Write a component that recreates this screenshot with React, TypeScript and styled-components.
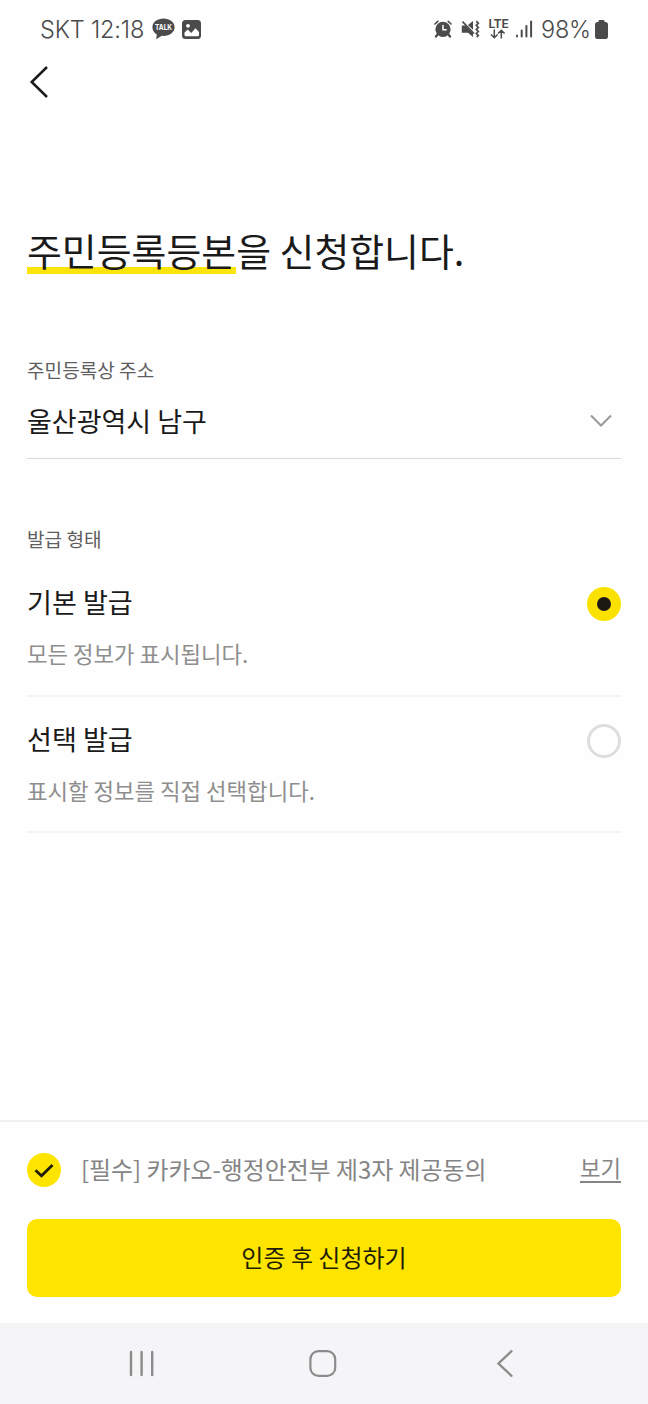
import React, { useState } from 'react';
import styled, { createGlobalStyle } from 'styled-components';

const GlobalStyle = createGlobalStyle`
  * { box-sizing: border-box; }
  body {
    margin: 0;
    background: #fefefe;
    font-family: "Noto Sans CJK KR", "Noto Sans", sans-serif;
    color: #1a1a1a;
  }
  button { font: inherit; color: inherit; background: none; border: 0; padding: 0; cursor: pointer; }
`;

const Screen = styled.div`
  display: flex;
  flex-direction: column;
  width: 648px;
  height: 1404px;
  background: #fefefe;
  overflow: hidden;
`;

const StatusBar = styled.header`
  display: flex;
  justify-content: space-between;
  align-items: center;
  height: 58px;
  padding: 0 40px 0 40px;
  color: #4b4b4b;
  svg { display: block; flex: none; }
`;

const StatusGroup = styled.div`
  display: flex;
  align-items: center;
`;

const StatusText = styled.span`
  display: block;
  padding-top: 1px;
  font-family: Inter, Roboto, sans-serif;
  font-size: 23.5px;
  font-weight: 340;
  line-height: 28px;
  letter-spacing: -0.15px;
  white-space: nowrap;
`;

const IconSlot = styled.span<{ $left: number }>`
  display: block;
  margin-left: ${(p) => p.$left}px;
`;

const NetworkType = styled.div`
  display: flex;
  flex-direction: column;
  align-items: center;
  width: 21px;
  margin: 0 7px 0 8px;
  padding-bottom: 1px;
  font: 600 12.5px/11px Roboto, sans-serif;
`;

const TopBar = styled.nav`
  display: flex;
  align-items: center;
  height: 48px;
  padding-left: 28px;
  svg { display: block; }
`;

const Main = styled.main`
  flex: 1;
  padding: 116px 27px 0;
`;

const Title = styled.h1`
  margin: 0;
  font-size: 37.9px;
  font-weight: 400;
  line-height: 56px;
  white-space: nowrap;
`;

const Highlight = styled.span`
  display: inline-block;
  height: 56px;
  background: linear-gradient(#fbe30c, #fbe30c) 0 45px / 100% 7px no-repeat;
`;

const Label = styled.h2`
  margin: 0;
  color: #5e5e5e;
  font-size: 19.1px;
  font-weight: 400;
  line-height: 28px;
`;

const AddressSection = styled.section`
  margin-top: 78px;
`;

const SelectField = styled.button`
  display: flex;
  align-items: center;
  justify-content: space-between;
  width: 100%;
  height: 75px;
  padding-right: 8px;
  border-bottom: 1px solid #d9d9d9;
  font-size: 27px;
  line-height: 40px;
  svg { display: block; }
`;

const IssueSection = styled.section`
  margin-top: 66px;
`;

const Option = styled.div<{ $first?: boolean }>`
  display: flex;
  justify-content: space-between;
  align-items: flex-start;
  height: ${(p) => (p.$first ? '144px' : '136px')};
  padding-top: ${(p) => (p.$first ? '29px' : '22px')};
  border-bottom: 2px solid #f4f4f4;
  cursor: pointer;
`;

const OptionName = styled.div`
  font-size: 27.1px;
  line-height: 40px;
`;

const OptionHint = styled.div`
  margin-top: 14px;
  color: #8e8e8e;
  font-size: 22.3px;
  line-height: 34px;
`;

const Radio = styled.span<{ $checked: boolean }>`
  display: flex;
  align-items: center;
  justify-content: center;
  width: 34px;
  height: 34px;
  margin-top: 5px;
  border-radius: 50%;
  border: ${(p) => (p.$checked ? '0' : '3px solid #dedede')};
  background: ${(p) => (p.$checked ? '#fae100' : 'transparent')};
  &::after {
    content: '';
    width: 14px;
    height: 14px;
    border-radius: 50%;
    background: ${(p) => (p.$checked ? '#1c1a10' : 'transparent')};
  }
`;

const Footer = styled.footer`
  height: 203px;
  padding: 26px 27px 0;
  border-top: 2px solid #f0f0f0;
`;

const ConsentRow = styled.div`
  display: flex;
  align-items: center;
  height: 44px;
  color: #858585;
  svg { display: block; margin-right: 20px; }
`;

const ConsentText = styled.span`
  flex: 1;
  padding-bottom: 3px;
  font-size: 23.9px;
  line-height: 36px;
  white-space: nowrap;
`;

const ViewLink = styled.button`
  height: 28px;
  margin-bottom: 3px;
  padding-bottom: 1px;
  border-bottom: 2px solid #858585;
  font-size: 22.3px;
  line-height: 25px;
`;

const SubmitButton = styled.button`
  display: block;
  width: 100%;
  height: 78px;
  margin-top: 27px;
  padding-bottom: 3px;
  border-radius: 10px;
  background: #fee500;
  color: #1f1c08;
  font-size: 24px;
  line-height: 36px;
`;

const SystemNav = styled.div`
  display: grid;
  grid-template-columns: 181px 188px 18px;
  align-items: center;
  height: 81px;
  padding-left: 128px;
  background: #f5f5f7;
  svg { display: block; }
`;

const TalkIcon = () => (
  <svg width="23" height="22" viewBox="0 0 23 22">
    <path d="M11.5 0.5C5.2 0.5 0.4 4.4 0.4 9.2c0 3.2 2 5.9 4.400 7.200L4.2 21.300l5.500-3.500c.6.1 1.200.1 1.800.1 6.300 0 11.100-3.900 11.100-8.700S17.800.5 11.500.5z" fill="#4b4b4b" />
    <text x="11.5" y="12.2" textAnchor="middle" textLength="17" lengthAdjust="spacingAndGlyphs" fontFamily="Inter, sans-serif" fontWeight="700" fontSize="8" fill="#fff">TALK</text>
  </svg>
);

const PhotoIcon = () => (
  <svg width="19" height="19" viewBox="0 0 19 19">
    <rect width="19" height="19" rx="3.5" fill="#4b4b4b" />
    <circle cx="6" cy="5.8" r="1.9" fill="#fff" />
    <path d="M2.500 15V12.600L5.800 9.600l3.400 3.300 4.300-4.700 3.500 3.800v3q0 1.200-1.200 1.200H3.700q-1.200 0-1.200-1.200z" fill="#fff" />
  </svg>
);

const AlarmIcon = () => (
  <svg width="18" height="18" viewBox="0 0 18 18" fill="none" stroke="#4b4b4b" strokeLinecap="round">
    <circle cx="9" cy="9.3" r="7.6" fill="#4b4b4b" stroke="none" />
    <path d="M1 4 3.800 1.300M17 4l-2.800-2.700" strokeWidth="1.6" />
    <path d="M3.800 14 2 16.500M14.200 14l1.800 2.500" strokeWidth="2.2" />
    <path d="M9 5.500v4.300h3.200" stroke="#fff" strokeWidth="1.5" />
  </svg>
);

const MuteIcon = () => (
  <svg width="19" height="18" viewBox="0 0 19 18" fill="none" stroke="#4b4b4b">
    <path d="M.8 5.500h3.600L12 13.200V17l-5-4.300H.8zM7 5 12 1v8.800z" fill="#4b4b4b" stroke="none" />
    <path d="M1.500 1.700 13 13.500" strokeWidth="1.7" />
    <path d="M15.300 1.200l2 2.100-2 2 2 2.100-2 2 2 2.100-2 2 2 2.100-1.500 1.600" strokeWidth="1.7" />
  </svg>
);

const DataArrows = () => (
  <svg width="16" height="10" viewBox="0 0 16 10" fill="none" stroke="#4b4b4b" strokeWidth="1.5">
    <path d="M4.300.5v8M1 5.500l3.300 3.300 3.300-3.300M11.300 9.500v-8M8 4.500l3.300-3.300 3.300 3.300" />
  </svg>
);

const SignalIcon = () => (
  <svg width="17" height="18" viewBox="0 0 17 18" fill="#4b4b4b">
    <rect x="0" y="14.5" width="2" height="3" rx="1" />
    <rect x="4.7" y="9.5" width="2" height="8" rx="1" />
    <rect x="9.4" y="5" width="2" height="12.5" rx="1" />
    <rect x="14.1" y=".5" width="2" height="17" rx="1" />
  </svg>
);

const BatteryIcon = () => (
  <svg width="13" height="19" viewBox="0 0 13 19" fill="#4b4b4b">
    <rect y="2" width="13" height="17" rx="2.8" />
    <rect x="3.5" y="0" width="6" height="4" rx="1" />
  </svg>
);

const options = [
  { name: '기본 발급', hint: '모든 정보가 표시됩니다.' },
  { name: '선택 발급', hint: '표시할 정보를 직접 선택합니다.' },
];

export default function App() {
  const [selected, setSelected] = useState(0);
  return (
    <Screen>
      <GlobalStyle />
      <StatusBar>
        <StatusGroup>
          <StatusText>SKT 12:18</StatusText>
          <IconSlot $left={8}><TalkIcon /></IconSlot>
          <IconSlot $left={7}><PhotoIcon /></IconSlot>
        </StatusGroup>
        <StatusGroup>
          <AlarmIcon />
          <IconSlot $left={9}><MuteIcon /></IconSlot>
          <NetworkType>LTE<DataArrows /></NetworkType>
          <SignalIcon />
          <IconSlot $left={8}><StatusText>98%</StatusText></IconSlot>
          <IconSlot $left={4}><BatteryIcon /></IconSlot>
        </StatusGroup>
      </StatusBar>
      <TopBar>
        <button aria-label="뒤로">
          <svg width="22" height="34" viewBox="0 0 22 34" fill="none" stroke="#1a1a1a" strokeWidth="2.5">
            <path d="M19 2 3.700 17 19 32" />
          </svg>
        </button>
      </TopBar>
      <Main>
        <Title><Highlight>주민등록등본</Highlight>을 신청합니다.</Title>
        <AddressSection>
          <Label>주민등록상 주소</Label>
          <SelectField>
            울산광역시 남구
            <svg width="24" height="14" viewBox="0 0 24 14" fill="none" stroke="#999" strokeWidth="2">
              <path d="M2 1.500l10 10L22 1.500" />
            </svg>
          </SelectField>
        </AddressSection>
        <IssueSection>
          <Label>발급 형태</Label>
          {options.map((o, i) => (
            <Option key={o.name} $first={i === 0} onClick={() => setSelected(i)}>
              <div>
                <OptionName>{o.name}</OptionName>
                <OptionHint>{o.hint}</OptionHint>
              </div>
              <Radio $checked={selected === i} />
            </Option>
          ))}
        </IssueSection>
      </Main>
      <Footer>
        <ConsentRow>
          <svg width="34" height="34" viewBox="0 0 34 34" fill="none">
            <circle cx="17" cy="17" r="17" fill="#fee500" />
            <path d="M8.500 17.200 14.500 22.800 25.500 12" stroke="#1f1c08" strokeWidth="2.8" />
          </svg>
          <ConsentText>[필수] 카카오-행정안전부 제3자 제공동의</ConsentText>
          <ViewLink>보기</ViewLink>
        </ConsentRow>
        <SubmitButton>인증 후 신청하기</SubmitButton>
      </Footer>
      <SystemNav>
        <svg width="27" height="28" viewBox="0 0 27 28" stroke="#8b8b8b" strokeWidth="2.4" strokeLinecap="round">
          <path d="M3 2v23M13.600 2v23M24.200 2v23" />
        </svg>
        <svg width="28" height="28" viewBox="0 0 28 28" fill="none" stroke="#8b8b8b" strokeWidth="2.2">
          <rect x="1.4" y="1.1" width="24.8" height="24.8" rx="8" />
        </svg>
        <svg width="18" height="28" viewBox="0 0 18 28" fill="none" stroke="#8b8b8b" strokeWidth="2.3" strokeLinecap="round">
          <path d="M14.500 1.200 1.500 13.500l13 12.300" />
        </svg>
      </SystemNav>
    </Screen>
  );
}
